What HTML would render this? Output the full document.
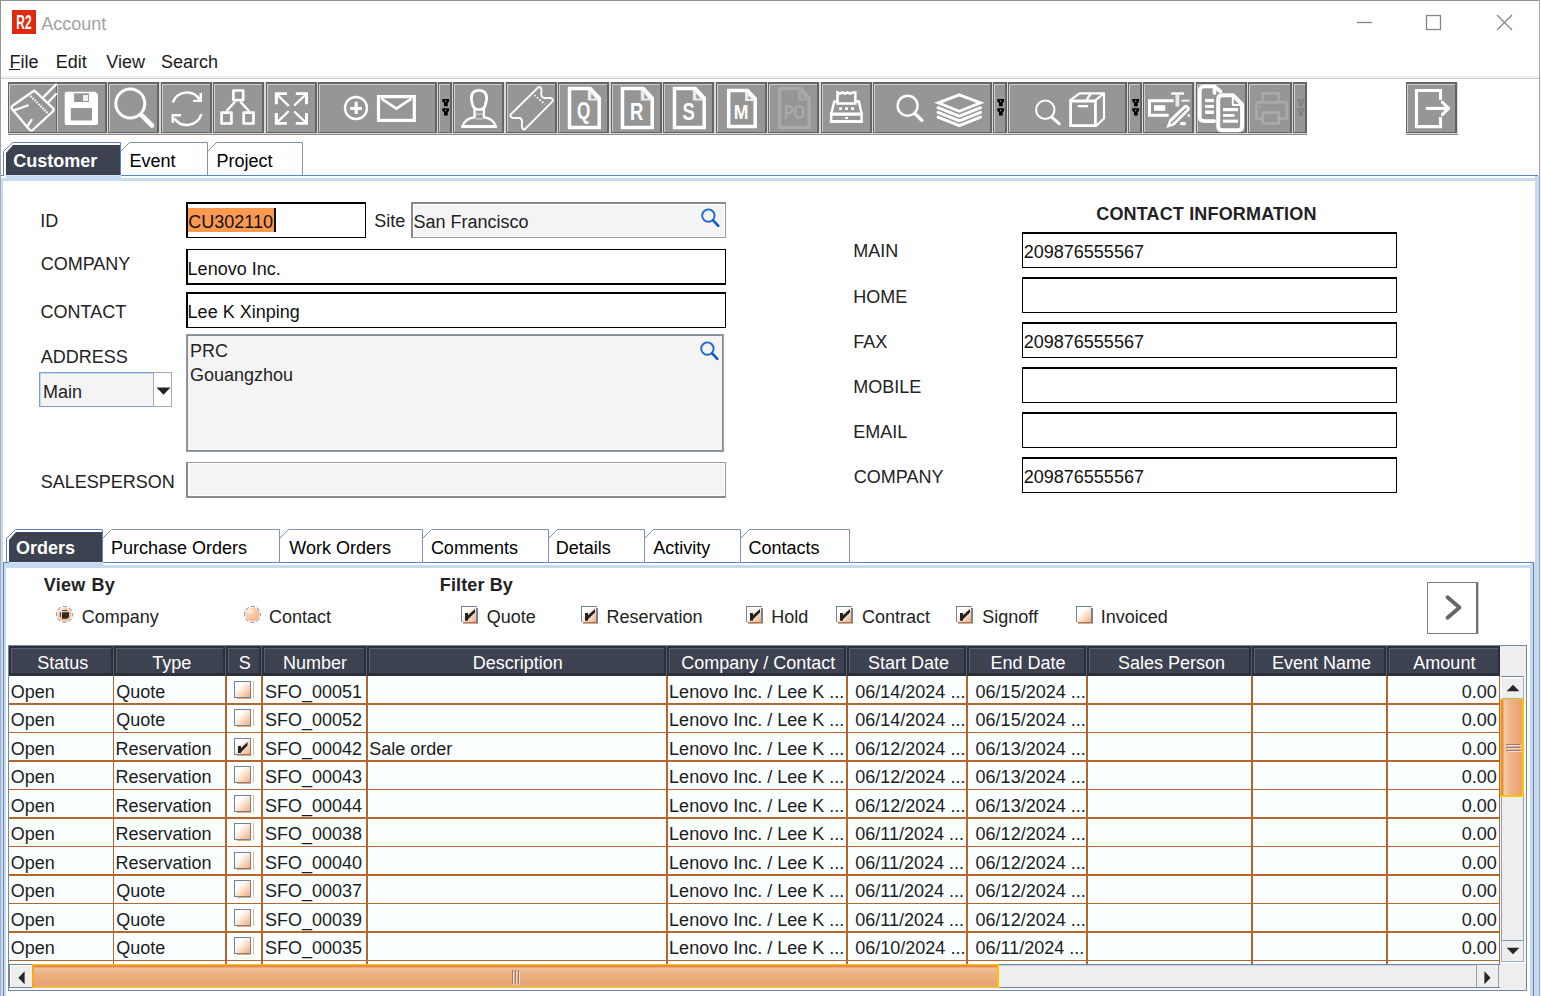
<!DOCTYPE html>
<html lang="en"><head><meta charset="utf-8"><title>Account</title>
<style>
html,body{margin:0;padding:0;}
body{width:1541px;height:996px;overflow:hidden;background:#fff;position:relative;font-family:"Liberation Sans",sans-serif;font-size:17px;color:#1e1e1e;}
div,span,svg{position:absolute;box-sizing:border-box;}
span{white-space:pre;}
.b{font-weight:bold;}
.tb{top:0;height:51px;background:#969696;box-shadow:inset 1px 2px 0 #666,inset -2px -1px 0 #646464,inset 2px 3px 0 #cdcdcd;}
.tb svg{left:0;top:0;overflow:visible;stroke-width:2;stroke-linecap:round;stroke-linejoin:round;}
.w{fill:none;stroke:#fff;}
.wf{fill:#fff;stroke:none;}
.dis .w{stroke:#a9a9a9;} .dis .wf{fill:#a9a9a9;}
.fld{background:#fff;border:1px solid #000;}
.ro{background:#f4f4f4;border:1px solid #9a9a9a;box-shadow:inset 0 0 0 1px #fff;}
.hc{top:0;height:30px;background:#3d4250;border:2px solid #2b2f39;border-bottom-width:3px;box-shadow:inset 1px 1px 0 #5a6070;}
</style></head>
<body>
<div style="left:0px;top:0px;width:1540px;height:1px;background:#8e9398;"></div>
<div style="left:0px;top:0px;width:1px;height:996px;background:linear-gradient(180deg,#8e9398 0,#9a9da0 80px,#aaabad 200px,#aaabad 100%);"></div>
<div style="left:1539px;top:0px;width:1px;height:996px;background:#a6a7aa;"></div>
<div style="left:1540px;top:76px;width:1px;height:920px;background:#eef0fa;"></div>
<div style="left:12px;top:10px;width:24px;height:24px;background:#e02a10;"><svg width="24" height="24" viewBox="0 0 24 24"><text x="4.300" y="18.500" font-family="Liberation Sans, sans-serif" font-weight="bold" font-size="19.500" fill="#fff" textLength="15.200" lengthAdjust="spacingAndGlyphs">R2</text></svg></div>
<span style="left:41.16px;top:12.76px;font-size:18px;line-height:22px;color:#a2a2a2;">Account</span>
<svg style="left:1350px;top:8px" width="180" height="30" viewBox="1350 8 180 30"><g fill="none" stroke="#858585" stroke-width="1.3"><path d="M1357 22.5H1372"/><rect x="1426.5" y="15.5" width="14" height="14"/><path d="M1497 15L1512 30M1512 15L1497 30"/></g></svg>
<span style="left:9.52px;top:50.76px;font-size:18px;line-height:22px;color:#1a1a1a;">File</span>
<div style="left:9px;top:69px;width:11px;height:1px;background:#1a1a1a;"></div>
<span style="left:55.82px;top:50.76px;font-size:18px;line-height:22px;color:#1a1a1a;">Edit</span>
<span style="left:106.32px;top:50.76px;font-size:18px;line-height:22px;color:#1a1a1a;">View</span>
<span style="left:160.98px;top:50.76px;font-size:18px;line-height:22px;color:#1a1a1a;">Search</span>
<div style="left:1px;top:76px;width:1538px;height:2px;background:#eeeeee;"></div>
<div style="left:1px;top:78px;width:1538px;height:1px;background:#cfcfcf;"></div>
<div style="left:8px;top:82px;width:1299px;height:53px;background:#d8d8d8;border-bottom:1px solid #8c8c8c;"><div class="tb" style="left:0px;width:49px;box-shadow:inset 1px 2px 0 #666,inset -1px -1px 0 #646464,inset 2px 3px 0 #cdcdcd;"><svg width="49" height="51" viewBox="0 0 49 51"><g class="w" stroke-width="2.3"><path d="M24.500 9.800 Q26 8.300 27.800 9.800 L44.800 26 Q46.500 27.800 44.800 29.500 L24.800 47.800 Q23 49.300 21.300 47.500 L4 27 Q2.700 25.200 4.500 23.800 Z"/><path d="M35.500 15 L48 2.500M40.500 20 L48 12"/><path d="M6 28.300 L19.600 23.500M19.500 44 L23.500 38"/></g><path class="w" stroke-width="2.200" stroke-linecap="butt" stroke-dasharray="1.600 1.200" d="M22.500 14 L40 31.500"/></svg></div><div class="tb" style="left:49px;width:50px;box-shadow:inset 0 2px 0 #666,inset -2px -1px 0 #646464,inset 1px 3px 0 #cdcdcd;"><svg width="50" height="51" viewBox="0 0 50 51"><path class="wf" fill-rule="evenodd" d="M9.500 9.800H38.300L41 12.500V41Q41 42.900 39 42.900H9.700Q7.700 42.900 7.700 41V11.800Q7.700 9.800 9.500 9.800ZM17.100 11.200V19.900H31.900V11.200ZM13.800 26V38.500H35V26Z"/><rect class="wf" x="26" y="13" width="5" height="6" opacity="0.850"/></svg></div><div class="tb" style="left:100px;width:51px;"><svg width="51" height="51" viewBox="0 0 51 51"><g class="w"><circle cx="22.300" cy="21.500" r="14.500" stroke-width="3"/><path d="M33.300 32.800L44 43.500" stroke-width="4.600"/></g></svg></div><div class="tb" style="left:153px;width:51px;"><svg width="51" height="51" viewBox="0 0 51 51"><g class="w" stroke-width="2.500" stroke-linecap="butt"><path d="M11.800 20.500 A15 15 0 0 1 38.600 17.500"/><path d="M40.300 32 A15 15 0 0 1 13.500 36.500"/></g><path class="wf" d="M38.600 11H41V20H32V17.800H38.600Z"/><path class="wf" d="M10.500 32H20V34.400H13V40.700H10.500Z"/></svg></div><div class="tb" style="left:205px;width:51px;"><svg width="51" height="51" viewBox="0 0 51 51"><g class="w" stroke-width="2.700" stroke-linejoin="round"><rect x="20.400" y="8.500" width="9.800" height="9.600"/><rect x="8.600" y="30.600" width="9.800" height="10.900"/><rect x="30.700" y="30.600" width="9.800" height="10.900"/></g><g class="w" stroke-width="2.400"><path d="M21.500 20.400L14 28.500M28 20.400L35.500 28.500"/></g></svg></div><div class="tb" style="left:258px;width:51px;"><svg width="51" height="51" viewBox="0 0 51 51"><g class="wf"><path d="M8.800 10.300H21V13H11.900V22.200H8.800Z"/><path d="M42 10.300H29.800V13H39V22.200H42Z"/><path d="M8.800 42.800H21V40H11.900V31H8.800Z"/><path d="M42 42.800H29.800V40H39V31H42Z"/></g><g class="w" stroke-width="2.400" stroke-linecap="butt"><path d="M11.500 13L22.800 24M39.300 13L28.200 23.500M11.500 40L22.800 29M39.300 40L28.200 29.500"/></g></svg></div><div class="tb" style="left:310px;width:119px;"><svg width="119" height="51" viewBox="0 0 119 51"><g class="w" stroke-width="2.400"><circle cx="38" cy="26" r="11"/></g><path class="wf" d="M32.100 25.100H36.600V19.800H39.800V25.100H43.900V28H39.800V32.100H36.600V28H32.100Z"/><g class="w" stroke-linejoin="miter" stroke-linecap="butt"><rect x="60.500" y="14.600" width="35.800" height="23.800" stroke-width="3.200"/><path d="M63.400 16.600L78.400 26.600L93.400 16.600" stroke-width="2.800"/></g></svg></div><div class="tb" style="left:430px;width:14px;"><svg width="14" height="51" viewBox="0 0 14 51"><path d="M4.300 17H11.100V19.600L9.700 21V24.300H6V21L4.300 19.600ZM4.300 26.200H11.100V28.800L9.700 30.200V33.400H6V30.200L4.300 28.800Z" fill="#000"/><path d="M7 18.500H8.300V20H7ZM7 27.700H8.300V29.200H7Z" fill="#8a8a8a"/></svg></div><div class="tb" style="left:445px;width:51px;"><svg width="51" height="51" viewBox="0 0 51 51"><g class="w" stroke-width="2.800"><path d="M18.400 18 Q17.800 8.300 26 8.300 Q34.200 8.300 33.600 18 L32 24 Q30.500 27.600 26 27.600 Q21.500 27.600 20 24 Z"/></g><g class="w" stroke-width="2.400"><path d="M21.600 27V35.300Q11 37 9.800 44.400H42.400Q41.200 37 30.900 35.300V27"/></g><path class="w" stroke-width="3" stroke-linecap="butt" d="M8.200 44.500H43.900"/><path class="w" stroke-width="1.200" opacity="0.600" d="M23 32.200H29.500M23 36.800H29.500"/></svg></div><div class="tb" style="left:498px;width:51px;"><svg width="51" height="51" viewBox="0 0 51 51"><g class="w" stroke-width="1.800"><path d="M32.600 5 L4.200 33 Q4.500 35.700 7 36 L13.500 36 Q16 36.500 16 39.500 L16 45 Q16.500 47.500 18.600 47.500 L47 18.800 Q46.500 16 44.500 16 L38.500 16 Q35.500 15.500 35.300 13 L35.500 7.500 Q35 5 32.600 5 Z"/><path d="M28.400 13.100L38.900 22.200" stroke-linecap="butt" stroke-dasharray="1.600 1.800" stroke-width="1.800"/></g></svg></div><div class="tb" style="left:550px;width:51px;"><svg width="51" height="51" viewBox="0 0 51 51"><g class="w" stroke-width="3.500" stroke-linejoin="miter" stroke-linecap="butt"><path d="M11.5 6.6H32.3L41.2 16V45.4H11.5Z"/></g><path class="wf" opacity="0.800" d="M29.799999999999997 8.1H32.3L39.7 16V18.5H29.799999999999997Z"/><path d="M33.3 11.6L37.2 16.5H33.3Z" fill="#969696"/><text x="25.700" y="37" text-anchor="middle" font-family="Liberation Sans, sans-serif" font-weight="bold" font-size="23.5" class="wf" textLength="13.3" lengthAdjust="spacingAndGlyphs">Q</text></svg></div><div class="tb" style="left:603px;width:51px;"><svg width="51" height="51" viewBox="0 0 51 51"><g class="w" stroke-width="3.500" stroke-linejoin="miter" stroke-linecap="butt"><path d="M11.5 6.6H32.3L41.2 16V45.4H11.5Z"/></g><path class="wf" opacity="0.800" d="M29.799999999999997 8.1H32.3L39.7 16V18.5H29.799999999999997Z"/><path d="M33.3 11.6L37.2 16.5H33.3Z" fill="#969696"/><text x="25.700" y="37.8" text-anchor="middle" font-family="Liberation Sans, sans-serif" font-weight="bold" font-size="24.5" class="wf" textLength="13.3" lengthAdjust="spacingAndGlyphs">R</text></svg></div><div class="tb" style="left:655px;width:51px;"><svg width="51" height="51" viewBox="0 0 51 51"><g class="w" stroke-width="3.500" stroke-linejoin="miter" stroke-linecap="butt"><path d="M11.5 6.6H32.3L41.2 16V45.4H11.5Z"/></g><path class="wf" opacity="0.800" d="M29.799999999999997 8.1H32.3L39.7 16V18.5H29.799999999999997Z"/><path d="M33.3 11.6L37.2 16.5H33.3Z" fill="#969696"/><text x="25.700" y="37.8" text-anchor="middle" font-family="Liberation Sans, sans-serif" font-weight="bold" font-size="24.5" class="wf" textLength="12.3" lengthAdjust="spacingAndGlyphs">S</text></svg></div><div class="tb" style="left:708px;width:51px;"><svg width="51" height="51" viewBox="0 0 51 51"><g class="w" stroke-width="3.500" stroke-linejoin="miter" stroke-linecap="butt"><path d="M12.7 8.6H31.5L39.2 16.6V44.5H12.7Z"/></g><path class="wf" opacity="0.800" d="M29.0 10.1H31.5L37.7 16.6V19.1H29.0Z"/><path d="M32.5 13.6L35.2 17.1H32.5Z" fill="#969696"/><text x="25.200" y="36.900" text-anchor="middle" font-family="Liberation Sans, sans-serif" font-weight="bold" font-size="21" class="wf" textLength="14.700" lengthAdjust="spacingAndGlyphs">M</text></svg></div><div class="tb dis" style="left:760px;width:51px;"><svg width="51" height="51" viewBox="0 0 51 51"><g class="w" stroke-width="3.500" stroke-linejoin="miter" stroke-linecap="butt"><path d="M11.5 6.6H32.3L41.2 16V45.4H11.5Z"/></g><path class="wf" opacity="0.800" d="M29.799999999999997 8.1H32.3L39.7 16V18.5H29.799999999999997Z"/><path d="M33.3 11.6L37.2 16.5H33.3Z" fill="#969696"/><text x="26.400" y="36.900" text-anchor="middle" font-family="Liberation Sans, sans-serif" font-weight="bold" font-size="20" class="wf" textLength="21" lengthAdjust="spacingAndGlyphs">PO</text></svg></div><div class="tb" style="left:813px;width:51px;"><svg width="51" height="51" viewBox="0 0 51 51"><g class="w" stroke-width="2.600" stroke-linejoin="miter"><path d="M16.500 21.500V10.500L19 11.500L21.500 10.500L24 11.500L26.500 10.500L29 11.500L31.500 10.500L34.300 10.500V21.500Z"/></g><g class="w" stroke-width="2.400" stroke-linejoin="miter"><path d="M15 19.500H13.300L10.200 32V39.500H40.600V32L37.900 19.500H36"/></g><path class="wf" d="M8.800 30.600H42V33.700H8.800ZM8.800 38.300H42V40.700H8.800ZM18.200 25.300H21V28.100H18.200ZM24.200 25.300H27V28.100H24.200ZM30.100 25.300H32.900V28.100H30.100ZM24.200 35.100H27V36.900H24.200Z"/></svg></div><div class="tb" style="left:865px;width:119px;"><svg width="119" height="51" viewBox="0 0 119 51"><g class="w"><circle cx="34.600" cy="23.700" r="10" stroke-width="2.400"/><path d="M42.300 32L48.800 38.300" stroke-width="3.400"/></g><g class="w" stroke-width="2.900" stroke-linejoin="miter"><path d="M86.300 12.800L107.500 20.800L86.300 29.300L65.200 20.800Z"/><path d="M65 25.700L86.300 34.200L107.600 25.700M65 30.400L86.300 38.900L107.600 30.400M65 35.100L86.300 43.600L107.600 35.100"/></g></svg></div><div class="tb" style="left:985px;width:14px;"><svg width="14" height="51" viewBox="0 0 14 51"><path d="M4.300 17H11.100V19.600L9.700 21V24.300H6V21L4.300 19.600ZM4.300 26.200H11.100V28.800L9.700 30.200V33.400H6V30.200L4.300 28.800Z" fill="#000"/><path d="M7 18.500H8.300V20H7ZM7 27.700H8.300V29.200H7Z" fill="#8a8a8a"/></svg></div><div class="tb" style="left:1000px;width:119px;"><svg width="119" height="51" viewBox="0 0 119 51"><g class="w"><circle cx="37.300" cy="27.800" r="9.200" stroke-width="2"/><path d="M44.600 35.800L51.300 41.800" stroke-width="3"/></g><g class="w" stroke-width="2.800" stroke-linejoin="miter" stroke-linecap="butt"><path d="M62.600 19H87.400V43.700H62.600Z"/></g><g class="w" stroke-width="2.200" stroke-linejoin="round"><path d="M62.600 18L71.500 11.300H96L87.800 18M96 11.300V36.500L88 44M78.500 18L83 11.500"/></g><path class="wf" d="M69.800 23H80.200V25.300H69.800Z"/></svg></div><div class="tb" style="left:1120px;width:14px;"><svg width="14" height="51" viewBox="0 0 14 51"><path d="M4.300 17H11.100V19.600L9.700 21V24.300H6V21L4.300 19.600ZM4.300 26.200H11.100V28.800L9.700 30.200V33.400H6V30.200L4.300 28.800Z" fill="#000"/><path d="M7 18.500H8.300V20H7ZM7 27.700H8.300V29.200H7Z" fill="#8a8a8a"/></svg></div><div class="tb" style="left:1135px;width:51px;"><svg width="51" height="51" viewBox="0 0 51 51"><g class="w" stroke-width="3" stroke-linejoin="miter" stroke-linecap="butt"><path d="M30.600 18.800H6.500V33.300H25.700"/></g><rect class="wf" x="11" y="23.200" width="11.200" height="5.600"/><path class="wf" d="M28.100 10.300H41.100V12.700H28.100Z"/><path class="wf" opacity="0.800" d="M32.500 12.700H36.300V24.600H32.500Z"/><path class="wf" opacity="0.800" d="M38.300 17.600H46.700V19.700H38.300Z"/><path class="wf" d="M23.300 46L26.300 37.600L41 23.600Q43 22 45 23.800L46 24.800Q47.800 26.800 46 28.800L31.600 43.200Z"/><path d="M28.500 41L43 26.800" fill="none" stroke="#8c8c8c" stroke-width="1.700" stroke-dasharray="1.500 1.600"/><path class="wf" d="M37.200 40H42.800V43.200H37.200ZM44.600 32.300H47V34.800H44.600Z" opacity="0.900"/></svg></div><div class="tb" style="left:1188px;width:51px;"><svg width="51" height="51" viewBox="0 0 51 51"><g class="w" stroke-width="3.700"><path d="M18.200 39.100H8Q3.800 39.100 3.800 35V8.700Q3.800 4.500 8 4.500H18.500L24.500 9.500"/><path d="M18.500 4.500V11"/></g><g class="w" stroke-width="4"><path d="M26.300 13.200H37L46.100 22.500V44.200Q46.100 48.300 42 48.300H26.300Q22.200 48.300 22.200 44.200V17.300Q22.200 13.200 26.300 13.200Z"/><path d="M36.800 13.500V23H46" stroke-width="2"/></g><g class="wf"><rect x="9.100" y="16.900" width="8.800" height="3.200"/><rect x="9.100" y="22.900" width="8.800" height="3.100"/><rect x="9.100" y="28.500" width="8.800" height="3.500"/><rect x="27" y="26" width="15" height="3.200"/><rect x="27" y="32" width="11.500" height="2.800"/><rect x="27" y="37.600" width="15" height="3.100"/></g></svg></div><div class="tb dis" style="left:1240px;width:44px;"><svg width="44" height="51" viewBox="0 0 44 51"><g class="w" stroke-width="2.700" stroke-linejoin="miter" stroke-linecap="butt"><path d="M14.700 19V11.300H30.600V19"/><path d="M14.700 36.500H8.400V22.500Q8.400 20.400 10.500 20.400H36.700Q38.800 20.400 38.800 22.500V36.500H30.600"/><path d="M14.700 30.600H30.600V41.400H14.700Z"/></g><rect class="wf" x="11.100" y="23" width="2" height="2.700"/></svg></div><div class="tb dis" style="left:1285px;width:14px;"><svg width="14" height="51" viewBox="0 0 14 51"><path d="M4.300 17H11.100V19.600L9.700 21V24.300H6V21L4.300 19.600ZM4.300 26.200H11.100V28.800L9.700 30.200V33.400H6V30.200L4.300 28.800Z" fill="#828282"/><path d="M7 18.500H8.300V20H7ZM7 27.700H8.300V29.200H7Z" fill="#a0a0a0"/></svg></div></div>
<div style="left:1406px;top:82px;width:52px;height:53px;background:#d8d8d8;border-bottom:1px solid #8c8c8c;"><div class="tb" style="left:0;width:51px;"><svg width="51" height="51" viewBox="0 0 51 51"><g class="w" stroke-width="3.100" stroke-linejoin="miter" stroke-linecap="butt"><path d="M34.500 18.100V8.500H10.500V44.600H34.500V35.100"/><path d="M19.900 26.400H40"/></g><path class="w" stroke-width="3" d="M36.300 20.200L42.600 26.400L36.300 32.600"/></svg></div></div>
<svg style="left:0;top:0" width="1541" height="600" viewBox="0 0 1541 600"><path d="M120.5 151.5L129.5 142.5H207.5V175" fill="none" stroke="#8393ab" stroke-width="1"/><path d="M207.5 151.5L216.5 142.5H302.5V175" fill="none" stroke="#8393ab" stroke-width="1"/><path d="M3.5 175V151.5L12.5 142.5H120.5V175" fill="none" stroke="#5f84c8" stroke-width="1"/><path d="M6.0 175V153L13.0 145H120.0V175Z" fill="#3d4250"/><path d="M102.5 538.5L111.5 529.5H279.5V562" fill="none" stroke="#8393ab" stroke-width="1"/><path d="M279.5 538.5L288.5 529.5H422.5V562" fill="none" stroke="#8393ab" stroke-width="1"/><path d="M422.5 538.5L431.5 529.5H548.5V562" fill="none" stroke="#8393ab" stroke-width="1"/><path d="M548.5 538.5L557.5 529.5H644.5V562" fill="none" stroke="#8393ab" stroke-width="1"/><path d="M644.5 538.5L653.5 529.5H740.5V562" fill="none" stroke="#8393ab" stroke-width="1"/><path d="M740.5 538.5L749.5 529.5H849.5V562" fill="none" stroke="#8393ab" stroke-width="1"/><path d="M6.5 562V538.5L15.5 529.5H102.5V562" fill="none" stroke="#5f84c8" stroke-width="1"/><path d="M9.0 562V540L16.0 532H102.0V562Z" fill="#3d4250"/></svg>
<span class="b" style="left:13.16px;top:149.76px;font-size:18px;line-height:22px;color:#fff;">Customer</span>
<span style="left:129.42px;top:149.76px;font-size:18px;line-height:22px;color:#000;">Event</span>
<span style="left:216.42px;top:149.76px;font-size:18px;line-height:22px;color:#000;">Project</span>
<div style="left:1px;top:176px;width:1538px;height:5px;background:#c6daf2;"></div>
<div style="left:121px;top:176px;width:1414px;height:2px;background:#fff;"></div>
<div style="left:1px;top:176px;width:5px;height:2px;background:#fff;"></div>
<div style="left:6px;top:175px;width:115px;height:1px;background:#d6e6f8;"></div>
<div style="left:121px;top:175px;width:1417px;height:1px;background:#5f84c8;"></div>
<div style="left:1px;top:175px;width:3px;height:1px;background:#5f84c8;"></div>
<div style="left:1px;top:178px;width:2px;height:818px;background:#c6daf2;"></div>
<div style="left:1535px;top:176px;width:4px;height:820px;background:#c6daf2;"></div>
<span style="left:40.34px;top:209.76px;font-size:18px;line-height:22px;color:#222;">ID</span>
<span style="left:40.69px;top:252.76px;font-size:18px;line-height:22px;color:#222;">COMPANY</span>
<span style="left:40.49px;top:300.76px;font-size:18px;line-height:22px;color:#222;">CONTACT</span>
<span style="left:40.76px;top:345.76px;font-size:18px;line-height:22px;color:#222;">ADDRESS</span>
<span style="left:40.78px;top:470.76px;font-size:18px;line-height:22px;color:#222;">SALESPERSON</span>
<div class="fld" style="left:186px;top:202px;width:180px;height:36px;border-width:2px 1px 1px 2px;"></div>
<div style="left:188px;top:208px;width:86px;height:24px;background:#fa9a50;"></div>
<div style="left:274px;top:208px;width:2px;height:24px;background:#111;"></div>
<span style="left:188.19px;top:210.76px;font-size:18px;line-height:22px;color:#111;">CU302110</span>
<span style="left:374.18px;top:209.76px;font-size:18px;line-height:22px;color:#222;">Site</span>
<div class="ro" style="left:411px;top:202px;width:315px;height:36px;border-width:2px 1px 1px 2px;border-color:#8a8a8a #9a9a9a #9a9a9a #8a8a8a;"></div>
<span style="left:413.48px;top:210.76px;font-size:18px;line-height:22px;color:#222;">San Francisco</span>
<svg style="left:701px;top:208px" width="20" height="20" viewBox="0 0 20 20"><g fill="none" stroke="#1f6acb" stroke-width="1.900"><circle cx="7.400" cy="7.600" r="6.200"/><path d="M12.200 12.400L17.300 17.800" stroke-width="2.600" stroke="#0f5cc4" stroke-linecap="round"/></g></svg>
<div class="fld" style="left:186px;top:249px;width:540px;height:36px;border-width:1px 1px 2px 2px;"></div>
<span style="left:187.62px;top:257.76px;font-size:18px;line-height:22px;color:#111;">Lenovo Inc.</span>
<div class="fld" style="left:186px;top:292px;width:540px;height:36px;border-width:2px 1px 1px 2px;"></div>
<span style="left:187.62px;top:300.76px;font-size:18px;line-height:22px;color:#111;">Lee K Xinping</span>
<div style="left:39px;top:372px;width:115px;height:35px;background:#f4f4f4;border:1px solid #7f9fd0;box-shadow:inset 1px 1px 0 #c8d8ee;"></div>
<span style="left:42.92px;top:380.76px;font-size:18px;line-height:22px;color:#222;">Main</span>
<div style="left:153px;top:372px;width:19px;height:35px;background:#fff;border:1px solid #a9a9a9;"></div>
<svg style="left:156px;top:386px" width="15" height="10" viewBox="0 0 15 10"><path d="M0.500 1.500H14.500L7.500 8.800Z" fill="#222"/></svg>
<div style="left:186px;top:334px;width:538px;height:118px;background:#f4f4f4;border:1px solid #8e9cb2;box-shadow:inset 0 0 0 1px #8c8c8c;"></div>
<span style="left:189.92px;top:339.76px;font-size:18px;line-height:22px;color:#222;">PRC</span>
<span style="left:189.99px;top:363.76px;font-size:18px;line-height:22px;color:#222;">Gouangzhou</span>
<svg style="left:699.600px;top:341px" width="20" height="20" viewBox="0 0 20 20"><g fill="none" stroke="#1f6acb" stroke-width="1.900"><circle cx="7.400" cy="7.600" r="6.200"/><path d="M12.200 12.400L17.300 17.800" stroke-width="2.600" stroke="#0f5cc4" stroke-linecap="round"/></g></svg>
<div class="ro" style="left:186px;top:462px;width:540px;height:36px;border-width:1px 1px 2px 2px;border-color:#9a9a9a #9a9a9a #8a8a8a #8a8a8a;"></div>
<span class="b" style="left:1096.26px;top:202.76px;font-size:18px;line-height:22px;color:#222;letter-spacing:0.160px;">CONTACT INFORMATION</span>
<span style="left:853.22px;top:239.76px;font-size:18px;line-height:22px;color:#222;">MAIN</span>
<div class="fld" style="left:1022px;top:232px;width:375px;height:36px;border-width:2px 1px 1px 1px;"></div>
<span style="left:1023.79px;top:240.76px;font-size:18px;line-height:22px;color:#111;">209876555567</span>
<span style="left:853.22px;top:285.76px;font-size:18px;line-height:22px;color:#222;">HOME</span>
<div class="fld" style="left:1022px;top:277px;width:375px;height:36px;border-width:2px 1px 1px 1px;"></div>
<span style="left:853.22px;top:330.76px;font-size:18px;line-height:22px;color:#222;">FAX</span>
<div class="fld" style="left:1022px;top:322px;width:375px;height:36px;border-width:2px 1px 1px 1px;"></div>
<span style="left:1023.79px;top:330.76px;font-size:18px;line-height:22px;color:#111;">209876555567</span>
<span style="left:853.22px;top:375.76px;font-size:18px;line-height:22px;color:#222;">MOBILE</span>
<div class="fld" style="left:1022px;top:367px;width:375px;height:36px;border-width:2px 1px 1px 1px;"></div>
<span style="left:853.22px;top:420.76px;font-size:18px;line-height:22px;color:#222;">EMAIL</span>
<div class="fld" style="left:1022px;top:412px;width:375px;height:36px;border-width:2px 1px 1px 1px;"></div>
<span style="left:853.79px;top:465.76px;font-size:18px;line-height:22px;color:#222;">COMPANY</span>
<div class="fld" style="left:1022px;top:457px;width:375px;height:36px;border-width:2px 1px 1px 1px;"></div>
<span style="left:1023.79px;top:465.76px;font-size:18px;line-height:22px;color:#111;">209876555567</span>
<span class="b" style="left:15.96px;top:536.76px;font-size:18px;line-height:22px;color:#fff;">Orders</span>
<span style="left:110.92px;top:536.76px;font-size:18px;line-height:22px;color:#000;">Purchase Orders</span>
<span style="left:289.22px;top:536.76px;font-size:18px;line-height:22px;color:#000;">Work Orders</span>
<span style="left:430.89px;top:536.76px;font-size:18px;line-height:22px;color:#000;">Comments</span>
<span style="left:555.72px;top:536.76px;font-size:18px;line-height:22px;color:#000;">Details</span>
<span style="left:653.16px;top:536.76px;font-size:18px;line-height:22px;color:#000;">Activity</span>
<span style="left:748.59px;top:536.76px;font-size:18px;line-height:22px;color:#000;">Contacts</span>
<div style="left:3px;top:563px;width:1530px;height:5px;background:#c6daf2;"></div>
<div style="left:103px;top:563px;width:1427px;height:2px;background:#fff;"></div>
<div style="left:9px;top:562px;width:94px;height:1px;background:#d6e6f8;"></div>
<div style="left:103px;top:562px;width:1431px;height:1px;background:#5f84c8;"></div>
<div style="left:3px;top:562px;width:6px;height:1px;background:#5f84c8;"></div>
<div style="left:3px;top:563px;width:1px;height:433px;background:#5f84c8;"></div>
<div style="left:4px;top:563px;width:2px;height:433px;background:#c6daf2;"></div>
<div style="left:1530px;top:565px;width:3px;height:431px;background:#c6daf2;"></div>
<div style="left:1533px;top:563px;width:1px;height:433px;background:#71839c;"></div>
<div style="left:1534px;top:563px;width:1px;height:433px;background:#c6daf2;"></div>
<span class="b" style="left:43.63px;top:573.76px;font-size:18px;line-height:22px;color:#222;letter-spacing:0.350px;word-spacing:0.400px;">View By</span>
<span class="b" style="left:439.8px;top:573.76px;font-size:18px;line-height:22px;color:#222;letter-spacing:0.120px;">Filter By</span>
<svg style="left:0;top:0" width="0" height="0"><defs><linearGradient id="cg" x1="0" y1="0" x2="1" y2="1"><stop offset="0.300" stop-color="#ffffff"/><stop offset="0.600" stop-color="#fbdcc4"/><stop offset="1" stop-color="#f3a872"/></linearGradient></defs></svg>
<svg style="left:0;top:0" width="0" height="0"><defs><radialGradient id="rg" cx="0.300" cy="0.250" r="0.900"><stop offset="0" stop-color="#fff4ea"/><stop offset="0.350" stop-color="#f9cfae"/><stop offset="1" stop-color="#f4ae7c"/></radialGradient></defs></svg>
<svg style="left:56px;top:606px" width="17" height="17" viewBox="0 0 17 17"><circle cx="8.500" cy="8.500" r="7" fill="url(#rg)"/><circle cx="8.500" cy="8.500" r="8" fill="none" stroke="#6f849c" stroke-width="1" stroke-dasharray="4.200 2.100" stroke-dashoffset="2.100"/><path d="M6 6.200H13V11L11 12.800H6Z" fill="#2a2a2a"/><path d="M6 4.500H11M4.400 6.200V11" stroke="#2a2a2a" stroke-width="0.900" fill="none"/></svg>
<span style="left:81.69px;top:605.76px;font-size:18px;line-height:22px;color:#222;">Company</span>
<svg style="left:244px;top:606px" width="17" height="17" viewBox="0 0 17 17"><circle cx="8.500" cy="8.500" r="7" fill="url(#rg)"/><circle cx="8.500" cy="8.500" r="8" fill="none" stroke="#6f849c" stroke-width="1" stroke-dasharray="4.200 2.100" stroke-dashoffset="2.100"/></svg>
<span style="left:269.09px;top:605.76px;font-size:18px;line-height:22px;color:#222;">Contact</span>
<svg style="left:461px;top:606px" width="21" height="19" viewBox="0 0 21 19"><rect x="1" y="1" width="15" height="15" fill="url(#cg)"/><path d="M0 0.500H16M0.500 0V16" stroke="#6f849c" stroke-width="1" fill="none"/><rect x="15" y="2" width="2" height="15" fill="#6f849c"/><rect x="2" y="16" width="15" height="1" fill="#6f849c"/><rect x="2" y="17" width="15" height="1" fill="#f5a462"/><path d="M4 7H7V9.200L14 3V6.500L7 13.300V14.800H4Z" fill="#222"/></svg>
<span style="left:486.85px;top:605.76px;font-size:18px;line-height:22px;color:#222;">Quote</span>
<svg style="left:581px;top:606px" width="21" height="19" viewBox="0 0 21 19"><rect x="1" y="1" width="15" height="15" fill="url(#cg)"/><path d="M0 0.500H16M0.500 0V16" stroke="#6f849c" stroke-width="1" fill="none"/><rect x="15" y="2" width="2" height="15" fill="#6f849c"/><rect x="2" y="16" width="15" height="1" fill="#6f849c"/><rect x="2" y="17" width="15" height="1" fill="#f5a462"/><path d="M4 7H7V9.200L14 3V6.500L7 13.300V14.800H4Z" fill="#222"/></svg>
<span style="left:606.52px;top:605.76px;font-size:18px;line-height:22px;color:#222;">Reservation</span>
<svg style="left:746px;top:606px" width="21" height="19" viewBox="0 0 21 19"><rect x="1" y="1" width="15" height="15" fill="url(#cg)"/><path d="M0 0.500H16M0.500 0V16" stroke="#6f849c" stroke-width="1" fill="none"/><rect x="15" y="2" width="2" height="15" fill="#6f849c"/><rect x="2" y="16" width="15" height="1" fill="#6f849c"/><rect x="2" y="17" width="15" height="1" fill="#f5a462"/><path d="M4 7H7V9.200L14 3V6.500L7 13.300V14.800H4Z" fill="#222"/></svg>
<span style="left:771.22px;top:605.76px;font-size:18px;line-height:22px;color:#222;">Hold</span>
<svg style="left:836px;top:606px" width="21" height="19" viewBox="0 0 21 19"><rect x="1" y="1" width="15" height="15" fill="url(#cg)"/><path d="M0 0.500H16M0.500 0V16" stroke="#6f849c" stroke-width="1" fill="none"/><rect x="15" y="2" width="2" height="15" fill="#6f849c"/><rect x="2" y="16" width="15" height="1" fill="#6f849c"/><rect x="2" y="17" width="15" height="1" fill="#f5a462"/><path d="M4 7H7V9.200L14 3V6.500L7 13.300V14.800H4Z" fill="#222"/></svg>
<span style="left:862.09px;top:605.76px;font-size:18px;line-height:22px;color:#222;">Contract</span>
<svg style="left:956px;top:606px" width="21" height="19" viewBox="0 0 21 19"><rect x="1" y="1" width="15" height="15" fill="url(#cg)"/><path d="M0 0.500H16M0.500 0V16" stroke="#6f849c" stroke-width="1" fill="none"/><rect x="15" y="2" width="2" height="15" fill="#6f849c"/><rect x="2" y="16" width="15" height="1" fill="#6f849c"/><rect x="2" y="17" width="15" height="1" fill="#f5a462"/><path d="M4 7H7V9.200L14 3V6.500L7 13.300V14.800H4Z" fill="#222"/></svg>
<span style="left:982.18px;top:605.76px;font-size:18px;line-height:22px;color:#222;">Signoff</span>
<svg style="left:1076px;top:606px" width="21" height="19" viewBox="0 0 21 19"><rect x="1" y="1" width="15" height="15" fill="url(#cg)"/><path d="M0 0.500H16M0.500 0V16" stroke="#6f849c" stroke-width="1" fill="none"/><rect x="15" y="2" width="2" height="15" fill="#6f849c"/><rect x="2" y="16" width="15" height="1" fill="#6f849c"/><rect x="2" y="17" width="15" height="1" fill="#f5a462"/></svg>
<span style="left:1100.64px;top:605.76px;font-size:18px;line-height:22px;color:#222;">Invoiced</span>
<div style="left:1427px;top:582px;width:51px;height:52px;background:#fff;border:1px solid #7a7a7a;border-right:2px solid #6e6e6e;box-shadow:1px 0 0 #d0d0d0;"></div>
<svg style="left:1440px;top:590px" width="30" height="36" viewBox="1440 590 30 36"><path d="M1447.500 597.300L1459.500 607.500L1447.500 617.700" fill="none" stroke="#666" stroke-width="3.800" stroke-linecap="round" stroke-linejoin="round"/></svg>
<div style="left:8px;top:645px;width:1519px;height:346px;background:#eeeeee;border:1px solid #75879f;"></div>
<div style="left:9px;top:646px;width:1491px;height:30px;background:#565c6b;"><div class="hc" style="left:0px;width:104px;"></div><div class="hc" style="left:105px;width:111px;"></div><div class="hc" style="left:217px;width:35px;"></div><div class="hc" style="left:253px;width:104px;"></div><div class="hc" style="left:358px;width:299px;"></div><div class="hc" style="left:658px;width:179px;"></div><div class="hc" style="left:838px;width:119px;"></div><div class="hc" style="left:958px;width:119px;"></div><div class="hc" style="left:1078px;width:164px;"></div><div class="hc" style="left:1243px;width:134px;"></div><div class="hc" style="left:1378px;width:113px;"></div></div>
<span style="left:10.65px;top:651.76px;font-size:18px;line-height:22px;color:#fff;width:104px;text-align:center;">Status</span>
<span style="left:116.2px;top:651.76px;font-size:18px;line-height:22px;color:#fff;width:111px;text-align:center;">Type</span>
<span style="left:227.35px;top:651.76px;font-size:18px;line-height:22px;color:#fff;width:35px;text-align:center;">S</span>
<span style="left:262.95px;top:651.76px;font-size:18px;line-height:22px;color:#fff;width:104px;text-align:center;">Number</span>
<span style="left:368.2px;top:651.76px;font-size:18px;line-height:22px;color:#fff;width:299px;text-align:center;">Description</span>
<span style="left:668.8px;top:651.76px;font-size:18px;line-height:22px;color:#fff;width:179px;text-align:center;">Company / Contact</span>
<span style="left:849.0px;top:651.76px;font-size:18px;line-height:22px;color:#fff;width:119px;text-align:center;">Start Date</span>
<span style="left:968.45px;top:651.76px;font-size:18px;line-height:22px;color:#fff;width:119px;text-align:center;">End Date</span>
<span style="left:1089.5px;top:651.76px;font-size:18px;line-height:22px;color:#fff;width:164px;text-align:center;">Sales Person</span>
<span style="left:1254.55px;top:651.76px;font-size:18px;line-height:22px;color:#fff;width:134px;text-align:center;">Event Name</span>
<span style="left:1387.9px;top:651.76px;font-size:18px;line-height:22px;color:#fff;width:113px;text-align:center;">Amount</span>
<div style="left:9px;top:676px;width:1491px;height:288px;background:#fafefe;overflow:hidden;"></div>
<span style="left:10.75px;top:680.76px;font-size:18px;line-height:22px;color:#1c1c1c;">Open</span>
<span style="left:116.15px;top:680.76px;font-size:18px;line-height:22px;color:#1c1c1c;">Quote</span>
<svg style="left:234px;top:681px" width="21" height="19" viewBox="0 0 21 19"><rect x="0.500" y="0.500" width="16" height="16" fill="url(#cg)" stroke="#6f849c" stroke-width="1"/><path d="M3 17.500H17" fill="none" stroke="#f3a468" stroke-width="1"/><path d="M19.500 0V17" fill="none" stroke="#f3a468" stroke-width="1" opacity="0.850"/></svg>
<span style="left:264.98px;top:680.76px;font-size:18px;line-height:22px;color:#1c1c1c;">SFO_00051</span>
<span style="left:669.12px;top:680.76px;font-size:18px;line-height:22px;color:#1c1c1c;">Lenovo Inc. / Lee K ...</span>
<span style="left:855.3px;top:680.76px;font-size:18px;line-height:22px;color:#1c1c1c;">06/14/2024 ...</span>
<span style="left:975.6px;top:680.76px;font-size:18px;line-height:22px;color:#1c1c1c;">06/15/2024 ...</span>
<span style="left:1396.7px;top:680.76px;font-size:18px;line-height:22px;color:#1c1c1c;width:100px;text-align:right;">0.00</span>
<span style="left:10.75px;top:708.76px;font-size:18px;line-height:22px;color:#1c1c1c;">Open</span>
<span style="left:116.15px;top:708.76px;font-size:18px;line-height:22px;color:#1c1c1c;">Quote</span>
<svg style="left:234px;top:709px" width="21" height="19" viewBox="0 0 21 19"><rect x="0.500" y="0.500" width="16" height="16" fill="url(#cg)" stroke="#6f849c" stroke-width="1"/><path d="M3 17.500H17" fill="none" stroke="#f3a468" stroke-width="1"/><path d="M19.500 0V17" fill="none" stroke="#f3a468" stroke-width="1" opacity="0.850"/></svg>
<span style="left:264.98px;top:708.76px;font-size:18px;line-height:22px;color:#1c1c1c;">SFO_00052</span>
<span style="left:669.12px;top:708.76px;font-size:18px;line-height:22px;color:#1c1c1c;">Lenovo Inc. / Lee K ...</span>
<span style="left:855.3px;top:708.76px;font-size:18px;line-height:22px;color:#1c1c1c;">06/14/2024 ...</span>
<span style="left:975.6px;top:708.76px;font-size:18px;line-height:22px;color:#1c1c1c;">06/15/2024 ...</span>
<span style="left:1396.7px;top:708.76px;font-size:18px;line-height:22px;color:#1c1c1c;width:100px;text-align:right;">0.00</span>
<span style="left:10.75px;top:737.76px;font-size:18px;line-height:22px;color:#1c1c1c;">Open</span>
<span style="left:115.52px;top:737.76px;font-size:18px;line-height:22px;color:#1c1c1c;">Reservation</span>
<svg style="left:234px;top:738px" width="21" height="19" viewBox="0 0 21 19"><rect x="0.500" y="0.500" width="16" height="16" fill="url(#cg)" stroke="#6f849c" stroke-width="1"/><path d="M3 17.500H17" fill="none" stroke="#f3a468" stroke-width="1"/><path d="M19.500 0V17" fill="none" stroke="#f3a468" stroke-width="1" opacity="0.850"/><path d="M4 8H7V10.200L13.500 4V7.500L7 14.300V15H4Z" fill="#222"/></svg>
<span style="left:264.98px;top:737.76px;font-size:18px;line-height:22px;color:#1c1c1c;">SFO_00042</span>
<span style="left:369.18px;top:737.76px;font-size:18px;line-height:22px;color:#1c1c1c;">Sale order</span>
<span style="left:669.12px;top:737.76px;font-size:18px;line-height:22px;color:#1c1c1c;">Lenovo Inc. / Lee K ...</span>
<span style="left:855.3px;top:737.76px;font-size:18px;line-height:22px;color:#1c1c1c;">06/12/2024 ...</span>
<span style="left:975.6px;top:737.76px;font-size:18px;line-height:22px;color:#1c1c1c;">06/13/2024 ...</span>
<span style="left:1396.7px;top:737.76px;font-size:18px;line-height:22px;color:#1c1c1c;width:100px;text-align:right;">0.00</span>
<span style="left:10.75px;top:765.76px;font-size:18px;line-height:22px;color:#1c1c1c;">Open</span>
<span style="left:115.52px;top:765.76px;font-size:18px;line-height:22px;color:#1c1c1c;">Reservation</span>
<svg style="left:234px;top:766px" width="21" height="19" viewBox="0 0 21 19"><rect x="0.500" y="0.500" width="16" height="16" fill="url(#cg)" stroke="#6f849c" stroke-width="1"/><path d="M3 17.500H17" fill="none" stroke="#f3a468" stroke-width="1"/><path d="M19.500 0V17" fill="none" stroke="#f3a468" stroke-width="1" opacity="0.850"/></svg>
<span style="left:264.98px;top:765.76px;font-size:18px;line-height:22px;color:#1c1c1c;">SFO_00043</span>
<span style="left:669.12px;top:765.76px;font-size:18px;line-height:22px;color:#1c1c1c;">Lenovo Inc. / Lee K ...</span>
<span style="left:855.3px;top:765.76px;font-size:18px;line-height:22px;color:#1c1c1c;">06/12/2024 ...</span>
<span style="left:975.6px;top:765.76px;font-size:18px;line-height:22px;color:#1c1c1c;">06/13/2024 ...</span>
<span style="left:1396.7px;top:765.76px;font-size:18px;line-height:22px;color:#1c1c1c;width:100px;text-align:right;">0.00</span>
<span style="left:10.75px;top:794.76px;font-size:18px;line-height:22px;color:#1c1c1c;">Open</span>
<span style="left:115.52px;top:794.76px;font-size:18px;line-height:22px;color:#1c1c1c;">Reservation</span>
<svg style="left:234px;top:795px" width="21" height="19" viewBox="0 0 21 19"><rect x="0.500" y="0.500" width="16" height="16" fill="url(#cg)" stroke="#6f849c" stroke-width="1"/><path d="M3 17.500H17" fill="none" stroke="#f3a468" stroke-width="1"/><path d="M19.500 0V17" fill="none" stroke="#f3a468" stroke-width="1" opacity="0.850"/></svg>
<span style="left:264.98px;top:794.76px;font-size:18px;line-height:22px;color:#1c1c1c;">SFO_00044</span>
<span style="left:669.12px;top:794.76px;font-size:18px;line-height:22px;color:#1c1c1c;">Lenovo Inc. / Lee K ...</span>
<span style="left:855.3px;top:794.76px;font-size:18px;line-height:22px;color:#1c1c1c;">06/12/2024 ...</span>
<span style="left:975.6px;top:794.76px;font-size:18px;line-height:22px;color:#1c1c1c;">06/13/2024 ...</span>
<span style="left:1396.7px;top:794.76px;font-size:18px;line-height:22px;color:#1c1c1c;width:100px;text-align:right;">0.00</span>
<span style="left:10.75px;top:822.76px;font-size:18px;line-height:22px;color:#1c1c1c;">Open</span>
<span style="left:115.52px;top:822.76px;font-size:18px;line-height:22px;color:#1c1c1c;">Reservation</span>
<svg style="left:234px;top:823px" width="21" height="19" viewBox="0 0 21 19"><rect x="0.500" y="0.500" width="16" height="16" fill="url(#cg)" stroke="#6f849c" stroke-width="1"/><path d="M3 17.500H17" fill="none" stroke="#f3a468" stroke-width="1"/><path d="M19.500 0V17" fill="none" stroke="#f3a468" stroke-width="1" opacity="0.850"/></svg>
<span style="left:264.98px;top:822.76px;font-size:18px;line-height:22px;color:#1c1c1c;">SFO_00038</span>
<span style="left:669.12px;top:822.76px;font-size:18px;line-height:22px;color:#1c1c1c;">Lenovo Inc. / Lee K ...</span>
<span style="left:855.3px;top:822.76px;font-size:18px;line-height:22px;color:#1c1c1c;">06/11/2024 ...</span>
<span style="left:975.6px;top:822.76px;font-size:18px;line-height:22px;color:#1c1c1c;">06/12/2024 ...</span>
<span style="left:1396.7px;top:822.76px;font-size:18px;line-height:22px;color:#1c1c1c;width:100px;text-align:right;">0.00</span>
<span style="left:10.75px;top:851.76px;font-size:18px;line-height:22px;color:#1c1c1c;">Open</span>
<span style="left:115.52px;top:851.76px;font-size:18px;line-height:22px;color:#1c1c1c;">Reservation</span>
<svg style="left:234px;top:852px" width="21" height="19" viewBox="0 0 21 19"><rect x="0.500" y="0.500" width="16" height="16" fill="url(#cg)" stroke="#6f849c" stroke-width="1"/><path d="M3 17.500H17" fill="none" stroke="#f3a468" stroke-width="1"/><path d="M19.500 0V17" fill="none" stroke="#f3a468" stroke-width="1" opacity="0.850"/></svg>
<span style="left:264.98px;top:851.76px;font-size:18px;line-height:22px;color:#1c1c1c;">SFO_00040</span>
<span style="left:669.12px;top:851.76px;font-size:18px;line-height:22px;color:#1c1c1c;">Lenovo Inc. / Lee K ...</span>
<span style="left:855.3px;top:851.76px;font-size:18px;line-height:22px;color:#1c1c1c;">06/11/2024 ...</span>
<span style="left:975.6px;top:851.76px;font-size:18px;line-height:22px;color:#1c1c1c;">06/12/2024 ...</span>
<span style="left:1396.7px;top:851.76px;font-size:18px;line-height:22px;color:#1c1c1c;width:100px;text-align:right;">0.00</span>
<span style="left:10.75px;top:879.76px;font-size:18px;line-height:22px;color:#1c1c1c;">Open</span>
<span style="left:116.15px;top:879.76px;font-size:18px;line-height:22px;color:#1c1c1c;">Quote</span>
<svg style="left:234px;top:880px" width="21" height="19" viewBox="0 0 21 19"><rect x="0.500" y="0.500" width="16" height="16" fill="url(#cg)" stroke="#6f849c" stroke-width="1"/><path d="M3 17.500H17" fill="none" stroke="#f3a468" stroke-width="1"/><path d="M19.500 0V17" fill="none" stroke="#f3a468" stroke-width="1" opacity="0.850"/></svg>
<span style="left:264.98px;top:879.76px;font-size:18px;line-height:22px;color:#1c1c1c;">SFO_00037</span>
<span style="left:669.12px;top:879.76px;font-size:18px;line-height:22px;color:#1c1c1c;">Lenovo Inc. / Lee K ...</span>
<span style="left:855.3px;top:879.76px;font-size:18px;line-height:22px;color:#1c1c1c;">06/11/2024 ...</span>
<span style="left:975.6px;top:879.76px;font-size:18px;line-height:22px;color:#1c1c1c;">06/12/2024 ...</span>
<span style="left:1396.7px;top:879.76px;font-size:18px;line-height:22px;color:#1c1c1c;width:100px;text-align:right;">0.00</span>
<span style="left:10.75px;top:908.76px;font-size:18px;line-height:22px;color:#1c1c1c;">Open</span>
<span style="left:116.15px;top:908.76px;font-size:18px;line-height:22px;color:#1c1c1c;">Quote</span>
<svg style="left:234px;top:909px" width="21" height="19" viewBox="0 0 21 19"><rect x="0.500" y="0.500" width="16" height="16" fill="url(#cg)" stroke="#6f849c" stroke-width="1"/><path d="M3 17.500H17" fill="none" stroke="#f3a468" stroke-width="1"/><path d="M19.500 0V17" fill="none" stroke="#f3a468" stroke-width="1" opacity="0.850"/></svg>
<span style="left:264.98px;top:908.76px;font-size:18px;line-height:22px;color:#1c1c1c;">SFO_00039</span>
<span style="left:669.12px;top:908.76px;font-size:18px;line-height:22px;color:#1c1c1c;">Lenovo Inc. / Lee K ...</span>
<span style="left:855.3px;top:908.76px;font-size:18px;line-height:22px;color:#1c1c1c;">06/11/2024 ...</span>
<span style="left:975.6px;top:908.76px;font-size:18px;line-height:22px;color:#1c1c1c;">06/12/2024 ...</span>
<span style="left:1396.7px;top:908.76px;font-size:18px;line-height:22px;color:#1c1c1c;width:100px;text-align:right;">0.00</span>
<span style="left:10.75px;top:936.76px;font-size:18px;line-height:22px;color:#1c1c1c;">Open</span>
<span style="left:116.15px;top:936.76px;font-size:18px;line-height:22px;color:#1c1c1c;">Quote</span>
<svg style="left:234px;top:937px" width="21" height="19" viewBox="0 0 21 19"><rect x="0.500" y="0.500" width="16" height="16" fill="url(#cg)" stroke="#6f849c" stroke-width="1"/><path d="M3 17.500H17" fill="none" stroke="#f3a468" stroke-width="1"/><path d="M19.500 0V17" fill="none" stroke="#f3a468" stroke-width="1" opacity="0.850"/></svg>
<span style="left:264.98px;top:936.76px;font-size:18px;line-height:22px;color:#1c1c1c;">SFO_00035</span>
<span style="left:669.12px;top:936.76px;font-size:18px;line-height:22px;color:#1c1c1c;">Lenovo Inc. / Lee K ...</span>
<span style="left:855.3px;top:936.76px;font-size:18px;line-height:22px;color:#1c1c1c;">06/10/2024 ...</span>
<span style="left:975.6px;top:936.76px;font-size:18px;line-height:22px;color:#1c1c1c;">06/11/2024 ...</span>
<span style="left:1396.7px;top:936.76px;font-size:18px;line-height:22px;color:#1c1c1c;width:100px;text-align:right;">0.00</span>
<div style="left:9px;top:703px;width:1491px;height:2px;background:#b4662c;"></div>
<div style="left:9px;top:732px;width:1491px;height:1px;background:#b4662c;"></div>
<div style="left:9px;top:760px;width:1491px;height:2px;background:#b4662c;"></div>
<div style="left:9px;top:789px;width:1491px;height:1px;background:#b4662c;"></div>
<div style="left:9px;top:817px;width:1491px;height:2px;background:#b4662c;"></div>
<div style="left:9px;top:846px;width:1491px;height:1px;background:#b4662c;"></div>
<div style="left:9px;top:874px;width:1491px;height:2px;background:#b4662c;"></div>
<div style="left:9px;top:903px;width:1491px;height:1px;background:#b4662c;"></div>
<div style="left:9px;top:931px;width:1491px;height:2px;background:#b4662c;"></div>
<div style="left:9px;top:960px;width:1491px;height:1px;background:#b4662c;"></div>
<div style="left:113px;top:676px;width:1px;height:288px;background:#b4662c;"></div>
<div style="left:225px;top:676px;width:2px;height:288px;background:#b4662c;"></div>
<div style="left:261px;top:676px;width:2px;height:288px;background:#b4662c;"></div>
<div style="left:366px;top:676px;width:2px;height:288px;background:#b4662c;"></div>
<div style="left:666px;top:676px;width:2px;height:288px;background:#b4662c;"></div>
<div style="left:846px;top:676px;width:2px;height:288px;background:#b4662c;"></div>
<div style="left:966px;top:676px;width:2px;height:288px;background:#b4662c;"></div>
<div style="left:1086px;top:676px;width:2px;height:288px;background:#b4662c;"></div>
<div style="left:1251px;top:676px;width:2px;height:288px;background:#b4662c;"></div>
<div style="left:1386px;top:676px;width:2px;height:288px;background:#b4662c;"></div>
<div style="left:1499px;top:676px;width:1px;height:288px;background:#b4662c;"></div>
<div style="left:1500px;top:646px;width:26px;height:30px;background:#eeeeee;"></div>
<div style="left:1500px;top:676px;width:26px;height:288px;background:#f6f6f6;"></div>
<div style="left:1501px;top:676px;width:23px;height:286px;background:#eeeeee;border:1px solid #8ea0b8;border-top-color:#75879f;"></div>
<div style="left:1501px;top:677px;width:23px;height:22px;background:#eeeeee;border:1px solid #9fb0c6;border-left-color:#fff;border-top-color:#fff;"></div>
<svg style="left:1506px;top:684px" width="14" height="8" viewBox="0 0 14 8"><path d="M0.600 7.300H13.400L7 0.700Z" fill="#262626"/></svg>
<div style="left:1500px;top:699px;width:24px;height:98px;background:linear-gradient(90deg,#e58c4e 0,#e58c4e 2px,#f4cbaa 3px,#eeb48a 45%,#e9a06c 100%);border-left:1px solid #ffc400;border-right:2px solid #ffc400;border-top:1px solid #ffc400;border-bottom:2px solid #ffc400;"></div>
<div style="left:1506px;top:744px;width:14px;height:1px;background:#8f7c88;"></div>
<div style="left:1508px;top:745px;width:14px;height:1px;background:#ffd9bc;"></div>
<div style="left:1506px;top:747px;width:14px;height:1px;background:#8f7c88;"></div>
<div style="left:1508px;top:748px;width:14px;height:1px;background:#ffd9bc;"></div>
<div style="left:1506px;top:750px;width:14px;height:1px;background:#8f7c88;"></div>
<div style="left:1508px;top:751px;width:14px;height:1px;background:#ffd9bc;"></div>
<div style="left:1501px;top:940px;width:23px;height:22px;background:#eeeeee;border:1px solid #9fb0c6;border-top-color:#8797ad;"></div>
<svg style="left:1506px;top:947px" width="14" height="8" viewBox="0 0 14 8"><path d="M0.600 0.700H13.400L7 7.300Z" fill="#262626"/></svg>
<div style="left:9px;top:964px;width:1517px;height:26px;background:#eeeeee;"></div>
<div style="left:9px;top:964px;width:1491px;height:24px;background:#eeeeee;border-top:1px solid #75879f;border-bottom:1px solid #75879f;box-shadow:inset 0 1px 0 #c4d6ec;"></div>
<div style="left:9px;top:988px;width:1491px;height:2px;background:#f4f8fc;"></div>
<div style="left:9px;top:964px;width:23px;height:24px;background:#eeeeee;border:1px solid #75879f;border-right:none;box-shadow:inset 1px 1px 0 #fff;"></div>
<svg style="left:17.500px;top:970.500px" width="8" height="14" viewBox="0 0 8 14"><path d="M6.600 0.300V13.300L0.400 6.800Z" fill="#262626"/></svg>
<div style="left:32px;top:964px;width:967px;height:24px;background:linear-gradient(180deg,#e58c4e 0,#e58c4e 2px,#f0c09c 3px,#eab080 45%,#e8a470 88%,#e6ab88 92%,#e6ab88 100%);border-left:2px solid #f7a823;border-right:2px solid #ffc400;border-top:1px solid #ffc400;border-bottom:1px solid #ffc400;"></div>
<div style="left:512px;top:970px;width:1px;height:14px;background:#8f7c88;"></div>
<div style="left:513px;top:972px;width:1px;height:13px;background:#ffd9bc;"></div>
<div style="left:515px;top:970px;width:1px;height:14px;background:#8f7c88;"></div>
<div style="left:516px;top:972px;width:1px;height:13px;background:#ffd9bc;"></div>
<div style="left:518px;top:970px;width:1px;height:14px;background:#8f7c88;"></div>
<div style="left:519px;top:972px;width:1px;height:13px;background:#ffd9bc;"></div>
<div style="left:1476px;top:964px;width:23px;height:24px;background:#eeeeee;border:1px solid #8ea0b8;border-top-color:#75879f;border-bottom-color:#75879f;"></div>
<svg style="left:1483.800px;top:970.500px" width="8" height="14" viewBox="0 0 8 14"><path d="M0.400 0.300V13.300L6.600 6.800Z" fill="#262626"/></svg>
</body></html>
